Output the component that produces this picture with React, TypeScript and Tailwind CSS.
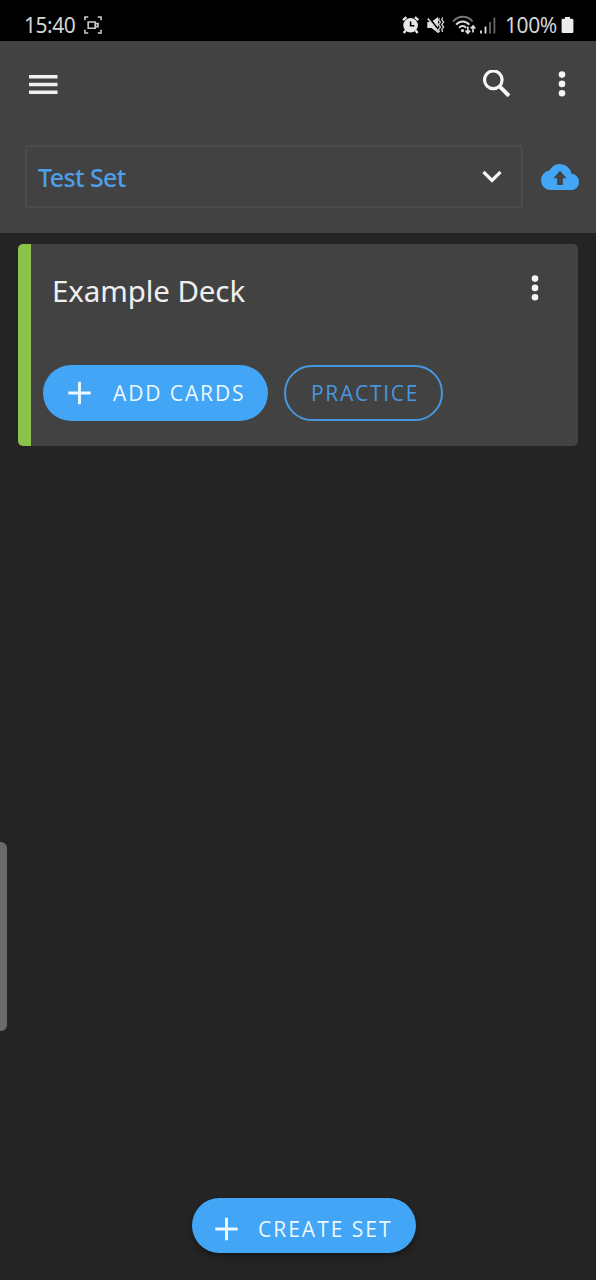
import React from "react";

function Dots() {
  return (
    <svg width="8" height="28" viewBox="0 0 8 28" fill="#f5f5f5" aria-hidden="true">
      <circle cx="4" cy="4.6" r="3.3" />
      <circle cx="4" cy="13.9" r="3.3" />
      <circle cx="4" cy="23.2" r="3.3" />
    </svg>
  );
}

function Plus() {
  return (
    <svg width="24" height="24" viewBox="0 0 24 24" stroke="#eef8ff" strokeWidth="2.9" aria-hidden="true">
      <path d="M11.500 .8v22.400M.3 12h22.400" />
    </svg>
  );
}

function StatusBar() {
  return (
    <div className="flex h-[41px] items-center bg-black pt-[9px] pr-[22px] pl-[24px] text-[21px] leading-[32px] text-[#d4d4d4]">
      <span className="w-[60px] tracking-[-0.5px]">15:40</span>
      <svg width="18" height="18" viewBox="0 0 19 19" fill="none" stroke="#c9c9c9" strokeWidth="1.7" aria-hidden="true">
        <path d="M1 4.500V1h3.500M14.500 1H18v3.500M18 14.500V18h-3.500M4.500 18H1v-3.500" />
        <path d="M4.400 6.300h7.400v6.600H4.400zM11.800 8h3v3.200h-3" />
      </svg>
      <div className="ml-auto flex items-center">
        <svg width="18" height="18" viewBox="0 0 18 18" aria-hidden="true">
          <path d="M1 4.200 4.400 1.200M16.400 4.200l-3.400-3M3.600 14.500 1.800 17M13.800 14.500l1.800 2.500" stroke="#e8e8e8" strokeWidth="2.300" />
          <circle cx="8.600" cy="9.300" r="7.300" fill="#e8e8e8" />
          <path d="M8.600 5.500v4.300h3.800" fill="none" stroke="#000" strokeWidth="1.600" />
        </svg>
        <svg className="ml-[7px]" width="18" height="18" viewBox="0 0 18 18" aria-hidden="true">
          <path d="M.3 6h3.700L11 1v16l-6.500-5H.3z" fill="#e0e0e0" />
          <path d="M1.500 1.500 13 16.500" stroke="#000" strokeWidth="2.800" />
          <path d="M.8 2.500 12 16.500" stroke="#e0e0e0" strokeWidth="1.500" />
          <path d="m12.500 2-1 2 2 2-2 2.500 2 2.500-2 2.500 1 2.500M15.700 1.500l-1 2.200 2 2.300-2 2.500 2 2.500-2 2.500 1 2.500" fill="none" stroke="#cfcfcf" strokeWidth="1.300" />
        </svg>
        <svg className="ml-[7px]" width="26" height="20" viewBox="0 0 26 20" fill="none" aria-hidden="true">
          <path d="M1 6.500C6.500 .2 15.500 .2 20.500 6.500" stroke="#777" strokeWidth="1.900" />
          <path d="M4.100 9.700c3.800-4.300 9.400-4.300 13.300 0" stroke="#ddd" strokeWidth="2" />
          <path d="M7.100 12.800c2-2.300 5-2.300 7 0" stroke="#ddd" strokeWidth="2" />
          <circle cx="10.500" cy="15.600" r="1.600" fill="#ddd" />
          <path d="M15.800 11.500v6.500M13.500 15.700l2.300 2.500 2.300-2.500M21 17.500v-6.500M18.700 13.500l2.300-2.500 2.300 2.500" stroke="#ddd" strokeWidth="1.700" />
        </svg>
        <svg className="ml-[2px]" width="17" height="18" viewBox="0 0 17 18" aria-hidden="true">
          <path d="M1 14.500V17.500M5.500 10.500V17.500" stroke="#e0e0e0" strokeWidth="1.800" />
          <path d="M10 6V17.500M14.400 1.500V17.500" stroke="#666" strokeWidth="1.800" />
        </svg>
        <span className="ml-[8px] w-[55px] tracking-[-0.4px]">100%</span>
        <svg className="ml-[1px]" width="13" height="18" viewBox="0 0 13 18" fill="#ececec" aria-hidden="true">
          <path d="M4 1h5v1.800h2.200q1.200 0 1.200 1.200v11.800q0 1.200-1.200 1.200H1.800q-1.200 0-1.200-1.200V4q0-1.200 1.200-1.200H4z" />
        </svg>
      </div>
    </div>
  );
}

export default function App() {
  return (
    <div className="relative flex h-[1280px] w-[596px] flex-col overflow-hidden bg-[#242424] font-['Noto_Sans',sans-serif]">
      <StatusBar />
      <header className="h-[192px] bg-[#424242]">
        <div className="flex h-[85px] items-center pr-[30px] pl-[29px]">
          <button className="pt-[2px]" aria-label="Menu">
            <svg width="29" height="21" viewBox="0 0 29 21" stroke="#f0f0f0" strokeWidth="3.4" aria-hidden="true">
              <path d="M0 2.700h28.500M0 10.500h28.500M0 18.300h28.500" />
            </svg>
          </button>
          <button className="mr-[47px] ml-auto" aria-label="Search">
            <svg width="28" height="28" viewBox="0 0 28 28" fill="none" stroke="#f5f5f5" aria-hidden="true">
              <circle cx="10.300" cy="9.800" r="8.800" strokeWidth="3.200" />
              <path d="m16.300 16.100 9.700 9.700" strokeWidth="4" />
            </svg>
          </button>
          <button aria-label="More options"><Dots /></button>
        </div>
        <div className="flex items-center pt-[19px] pl-[25px]">
          <button className="flex h-[63px] w-[498px] items-center justify-between rounded-[4px] border-2 border-[#4c4c4c] pr-[19px] pl-[11px]">
            <span className="text-[25px] leading-[32px] font-medium tracking-[-0.6px] text-[#4d9fea]">Test Set</span>
            <svg width="20" height="14" viewBox="0 0 20 14" fill="none" stroke="#f5f5f5" strokeWidth="3.200" aria-hidden="true">
              <path d="m1.500 2 8.500 8.500L18.500 2" />
            </svg>
          </button>
          <button className="ml-[18px]" aria-label="Upload">
            <svg width="38" height="26" viewBox="0 4 24 16" preserveAspectRatio="none" fill="#42a5f5" aria-hidden="true">
              <path d="M19.350 10.040A7.490 7.490 0 0 0 12 4C9.110 4 6.600 5.640 5.350 8.040A5.994 5.994 0 0 0 0 14c0 3.310 2.690 6 6 6h13c2.760 0 5-2.240 5-5 0-2.640-2.050-4.780-4.650-4.960z" />
              <path d="M13.800 12.800v4.100h-3.600v-4.100H7.800L12 8.200l4.200 4.600z" fill="#424242" />
            </svg>
          </button>
        </div>
      </header>

      <main className="pt-[11px] pr-[18px] pl-[18px]">
        <article className="flex h-[202px] flex-col justify-between rounded-[5px] border-l-[13px] border-[#8bc34a] bg-[#424242] pt-[25px] pb-[25px] pl-[12px]">
          <div className="flex items-start justify-between pr-[39px] pl-[9px]">
            <h1 className="pt-[1px] text-[29.5px] leading-[42px] tracking-[-0.1px] text-[#efefef]">Example Deck</h1>
            <span className="pt-[5px]"><Dots /></span>
          </div>
          <div className="flex gap-[16px] font-['Open_Sans',sans-serif] text-[21px]">
            <button className="flex h-[56px] w-[225px] items-center rounded-full bg-[#42a5f5] pl-[25px] text-[#eef8ff]">
              <Plus />
              <span className="ml-[21px] pt-[2px] tracking-[1.9px] whitespace-nowrap">ADD CARDS</span>
            </button>
            <button className="flex h-[56px] w-[159px] items-center rounded-full border-2 border-[#4896df] pl-[25px] text-[#4896df]">
              <span className="pt-[2px] tracking-[1.7px]">PRACTICE</span>
            </button>
          </div>
        </article>
      </main>

      <div className="absolute top-[842px] left-0 h-[189px] w-[7px] rounded-r-[6px] bg-[#6a6a6a]" />

      <footer className="mt-auto flex justify-center pb-[27px] pl-[12px] font-['Open_Sans',sans-serif] text-[21px]">
        <button className="flex h-[55px] w-[224px] items-center rounded-full bg-[#42a5f5] pt-[6px] pl-[23px] text-[#eef8ff] shadow-[0_3px_6px_rgba(0,0,0,0.4)]">
          <Plus />
          <span className="ml-[19px] pt-[2px] tracking-[2px] whitespace-nowrap">CREATE SET</span>
        </button>
      </footer>
    </div>
  );
}
